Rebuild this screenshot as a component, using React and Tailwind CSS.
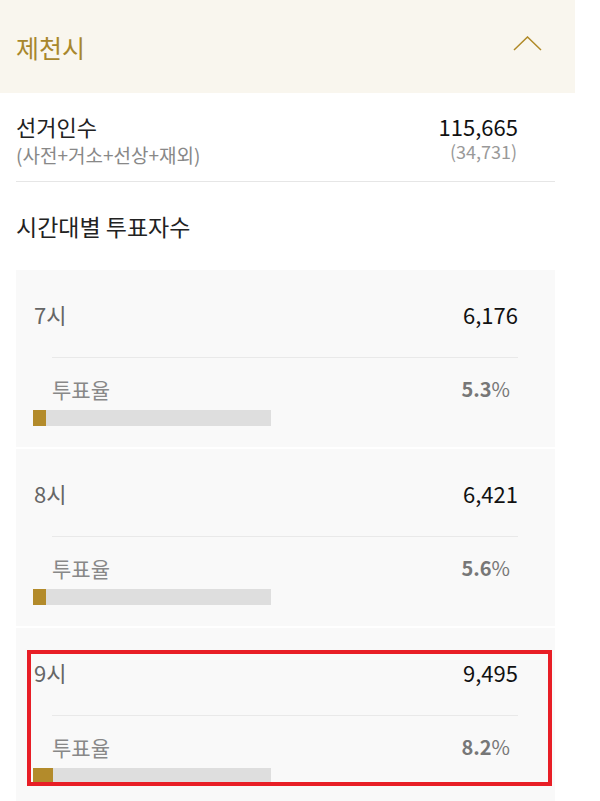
import React from "react";

const rows = [
  { h: "7시", n: "6,176", r: "5.3", w: 13 },
  { h: "8시", n: "6,421", r: "5.6", w: 13 },
  { h: "9시", n: "9,495", r: "8.2", w: 20 },
];

function Card({ row, last }) {
  return (
    <div className="relative h-[177px] shrink-0 bg-[#f9f9f9] pl-[18px] pr-[37px]">
      <div className="flex justify-between pt-[30px] text-[22px] leading-[28px]">
        <span className="text-[#666]">{row.h}</span>
        <span className="text-[#111]">{row.n}</span>
      </div>
      <div className="ml-[18px] mt-[29px] h-px bg-[#e9e9e9]" />
      <div className="ml-[18px] mt-[18px] flex justify-between pr-[8px] text-[21px] leading-[26px]">
        <span className="text-[#888]">투표율</span>
        <span className="text-[20px] text-[#777]">
          <span className="font-bold">{row.r}</span>%
        </span>
      </div>
      <div className="-ml-px mt-[8px] h-[16px] w-[238px] bg-[#dedede]">
        <div className="h-full bg-[#b38b2b]" style={{ width: row.w }} />
      </div>
      {last && (
        <div className="pointer-events-none absolute left-[11px] top-[22px] h-[136px] w-[525px] border-[4px] border-[#e81e26]" />
      )}
    </div>
  );
}

export default function App() {
  return (
    <div className="h-[801px] w-[600px] overflow-hidden bg-white font-['Noto_Sans_CJK_KR','Noto_Sans',sans-serif]">
      <div className="flex h-[93px] w-[575px] items-center justify-between bg-[#f9f6ee] pl-4 pr-[33px]">
        <span className="text-[25px] leading-[30px] text-[#a8872c]">제천시</span>
        <svg width="29" height="15" viewBox="0 0 29 15" className="mt-[-6px]">
          <polyline points="1,14 14.5,1 28,14" fill="none" stroke="#b08a28" strokeWidth="1.5" />
        </svg>
      </div>
      <div className="ml-4 w-[539px]">
        <div className="flex h-[89px] justify-between border-b border-[#e6e6e6] pt-[20px]">
          <div className="flex flex-col">
            <span className="text-[22px] leading-[26px] text-[#222]">선거인수</span>
            <span className="mt-[5px] text-[19px] leading-[22px] text-[#888]">(사전+거소+선상+재외)</span>
          </div>
          <div className="flex flex-col items-end pr-[37px]">
            <span className="text-[22px] leading-[26px] text-[#111]">115,665</span>
            <span className="mt-[2px] pr-px text-[18px] leading-[20px] text-[#999]">(34,731)</span>
          </div>
        </div>
        <div className="h-[88px] pt-[30px] text-[23px] leading-[28px] text-[#222]">시간대별 투표자수</div>
        <div className="flex flex-col gap-[2px]">
          {rows.map((r, i) => (
            <Card key={r.h} row={r} last={i === rows.length - 1} />
          ))}
        </div>
      </div>
    </div>
  );
}
